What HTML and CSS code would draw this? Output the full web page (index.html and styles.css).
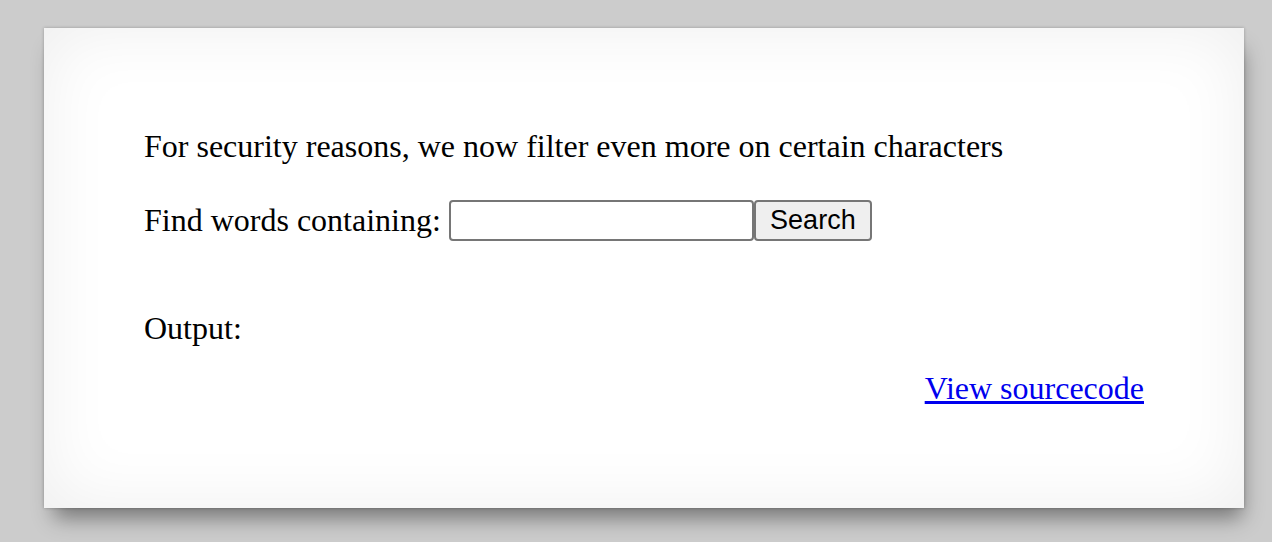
FILE: index.html
```html
<!DOCTYPE html>
<html>
<head>
<meta charset="utf-8">
<title>natas</title>
<link rel="stylesheet" href="styles.css">
</head>
<body>
<div class="content">
  <p class="intro">For security reasons, we now filter even more on certain characters</p>
  <form class="search">
    <label class="search-label" for="needle">Find words containing:</label>
    <input class="needle" id="needle" name="needle" type="text">
    <input class="submit" type="submit" name="submit" value="Search">
  </form>
  <div class="output">Output:</div>
  <pre class="result"></pre>
  <div class="viewsource"><a href="index-source.html">View sourcecode</a></div>
</div>
</body>
</html>
```
FILE: styles.css
```css
html, body {
  margin: 0;
  padding: 0;
}
body {
  background: #cccccc;
  padding: 28px 0 0 44px;
  height: 542px;
  box-sizing: border-box;
  font-family: "Liberation Serif", "Times New Roman", serif;
  font-size: 32px;
  color: #000;
}
.content {
  width: 1200px;
  box-sizing: border-box;
  padding: 101px 100px 102px 100px;
  background: #ffffff;
  box-shadow: inset 0 0 70px rgba(0, 0, 0, 0.07), 0 0 3px rgba(0, 0, 0, 0.25), 4px 16px 20px -6px rgba(0, 0, 0, 0.42);
  display: flex;
  flex-direction: column;
}
.intro {
  margin: 0;
  line-height: 34.5px;
}
.search {
  margin: 37px 0 0 0;
  display: flex;
  align-items: center;
  height: 40px;
}
.search-label {
  margin-right: 8px;
  line-height: 34.5px;
}
.needle {
  width: 305px;
  height: 41px;
  box-sizing: border-box;
  border: 2px solid #767676;
  border-radius: 4px;
  background: #fff;
  margin: 0;
  padding: 2px 4px;
  font-size: 25px;
}
.submit {
  width: 118px;
  height: 41px;
  box-sizing: border-box;
  border: 2px solid #767676;
  border-radius: 4px;
  background: #efefef;
  margin: 0;
  padding: 0;
  font-family: "Liberation Sans", Arial, sans-serif;
  font-size: 27px;
  color: #000;
}
.output {
  margin-top: 70px;
  line-height: 34.5px;
}
.result {
  margin: 0;
  height: 26px;
}
.viewsource {
  text-align: right;
  line-height: 34.5px;
}
.viewsource a {
  color: #0000ee;
  text-decoration: underline;
}
```
